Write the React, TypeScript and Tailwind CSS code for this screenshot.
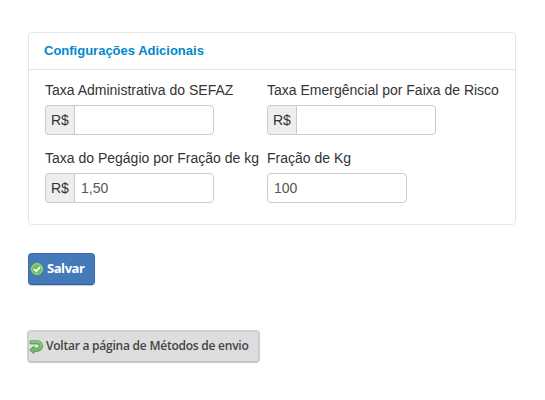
import React from 'react';
import { clsx } from 'clsx';

interface FieldProps {
  label: string;
  value?: string;
  prefix?: string;
}

const Field = ({ label, value = '', prefix }: FieldProps) => (
  <div className="h-[68px]">
    <label className="block h-5 whitespace-nowrap text-[14px] leading-5 text-[#333]">{label}</label>
    <div className="mt-[5px] flex h-[30px]">
      {prefix && (
        <span className="w-[29px] shrink-0 rounded-l-[4px] border border-r-0 border-[#ccc] bg-[#eee] pl-[5px] text-[14px] leading-7 text-[#333]">
          {prefix}
        </span>
      )}
      <input
        type="text"
        aria-label={label}
        defaultValue={value}
        className={clsx(
          'h-[30px] w-[140px] border border-[#ccc] bg-white px-[6px] text-[14px] leading-5 text-[#555] outline-none',
          prefix ? 'rounded-r-[4px]' : 'rounded-[4px]'
        )}
      />
    </div>
  </div>
);

const CheckIcon = () => (
  <svg className="h-[14px] w-[14px] shrink-0" viewBox="0 0 14 14" fill="none">
    <circle cx="7" cy="7" r="6.5" fill="#4ba848" />
    <circle cx="7" cy="7" r="5.4" fill="#6fbd65" stroke="#c8e8c2" strokeWidth="0.7" />
    <path d="M4 7.1 6.2 9.2 10.2 5" stroke="#fff" strokeWidth="1.8" />
  </svg>
);

const BackIcon = () => (
  <svg className="h-[14px] w-[14px] shrink-0" viewBox="0 0 14 14" fill="none">
    <path
      d="M1.2 .8H8C11.3 .8 13.5 2.9 13.5 6S11.3 11.3 8 11.3H5V13.6L.5 9.9 5 6.3V8.2H8C9.5 8.2 10.2 7.2 10.2 6S9.5 3.9 8 3.9H1.2Z"
      fill="#72bd6b"
      stroke="#439744"
      strokeWidth="0.8"
      strokeLinejoin="round"
    />
    <path d="M2 1.8H8C10.7 1.8 12.4 3.4 12.4 6" stroke="#a2d99a" strokeWidth="0.8" />
  </svg>
);

export default function App() {
  return (
    <main className="h-[400px] w-[545px] overflow-hidden bg-white pl-[28px] pt-[32px] font-['Liberation_Sans',Arial,sans-serif]">
      <section className="h-[193px] w-[488px] rounded-[4px] border border-[#e5e5e5]">
        <h2 className="h-[37px] border-b border-[#e5e5e5] pl-[15px] text-[13px] font-bold leading-[35px] text-[#0088cc]">
          Configurações Adicionais
        </h2>
        <div className="grid grid-cols-[222px_1fr] pl-4 pt-[10px]">
          <Field label="Taxa Administrativa do SEFAZ" prefix="R$" />
          <Field label="Taxa Emergêncial por Faixa de Risco" prefix="R$" />
          <Field label="Taxa do Pegágio por Fração de kg" prefix="R$" value="1,50" />
          <Field label="Fração de Kg" value="100" />
        </div>
      </section>

      {/* Actions */}
      <button className="mt-[28px] flex h-[32px] w-[67px] items-center gap-[3px] rounded-[4px] border border-[#3b6ea9] border-b-[#2f5f9b] bg-[#4479ba] pl-px font-['Open_Sans',sans-serif] text-[13px] font-bold text-white shadow-[0_1px_1px_rgba(0,0,0,0.2)]">
        <CheckIcon />
        <span className="pb-[2px] leading-none tracking-[-0.45px]">Salvar</span>
      </button>
      <button className="-ml-px mt-[45px] flex h-[33px] w-[233px] items-center gap-[3px] rounded-[4px] border-2 border-x-[#cecece] border-t-[#d2d2d2] border-b-[#c6c6c6] bg-[#ddd] font-['Open_Sans',sans-serif] text-[12px] font-semibold text-[#444]">
        <BackIcon />
        <span className="whitespace-nowrap pb-px leading-none tracking-[-0.235px]">Voltar a página de Métodos de envio</span>
      </button>
    </main>
  );
}
